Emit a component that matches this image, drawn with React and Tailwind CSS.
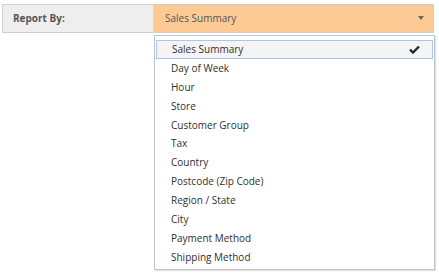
import React from 'react';

const options = [
  'Sales Summary',
  'Day of Week',
  'Hour',
  'Store',
  'Customer Group',
  'Tax',
  'Country',
  'Postcode (Zip Code)',
  'Region / State',
  'City',
  'Payment Method',
  'Shipping Method',
];

function Check() {
  return (
    <svg width="11" height="9" viewBox="0 0 11 9" className="block">
      <path d="M1 4.6 L4 7.6 L10 1.4" fill="none" stroke="#1f2530" strokeWidth="2.2" />
    </svg>
  );
}

export default function App() {
  const selected = 'Sales Summary';

  return (
    <div className="relative h-[274px] w-[439px] bg-white font-['Open_Sans',sans-serif] text-[10px]">
      {/* Report by bar */}
      <div className="pl-[2px] pt-[4px]">
        <div className="flex h-[29px] w-[432px] border border-[#cfcfcf]">
          <div className="flex w-[151px] items-center border-r border-[#d4d4d4] bg-[#eeeeee] pl-[10px] font-bold text-[#555]">
            Report By:
          </div>
          <div className="flex flex-1 items-center justify-between bg-[#fdca96] pl-[11px] pr-[9px] text-[#555]">
            <span>{selected}</span>
            <span className="mb-[2px] h-0 w-0 border-x-[3.5px] border-t-[4px] border-x-transparent border-t-[#666]" />
          </div>
        </div>
      </div>

      {/* Dropdown */}
      <div className="absolute left-[154px] top-[35px] h-[235px] w-[281px] border border-[#c4c4c4] bg-white pt-[4px] shadow-[1px_1px_1px_rgba(0,0,0,0.12)]">
        {options.map((opt) => (
          <div
            key={opt}
            className={`mx-[1px] flex h-[18.9px] items-center justify-between pl-[15px] pr-[12px] text-[#2f2f2f] ${
              opt === selected ? 'border border-[#a7c5f5] bg-[#f4f4f4] pl-[14px]' : ''
            }`}
          >
            <span>{opt}</span>
            {opt === selected && <Check />}
          </div>
        ))}
      </div>
    </div>
  );
}
